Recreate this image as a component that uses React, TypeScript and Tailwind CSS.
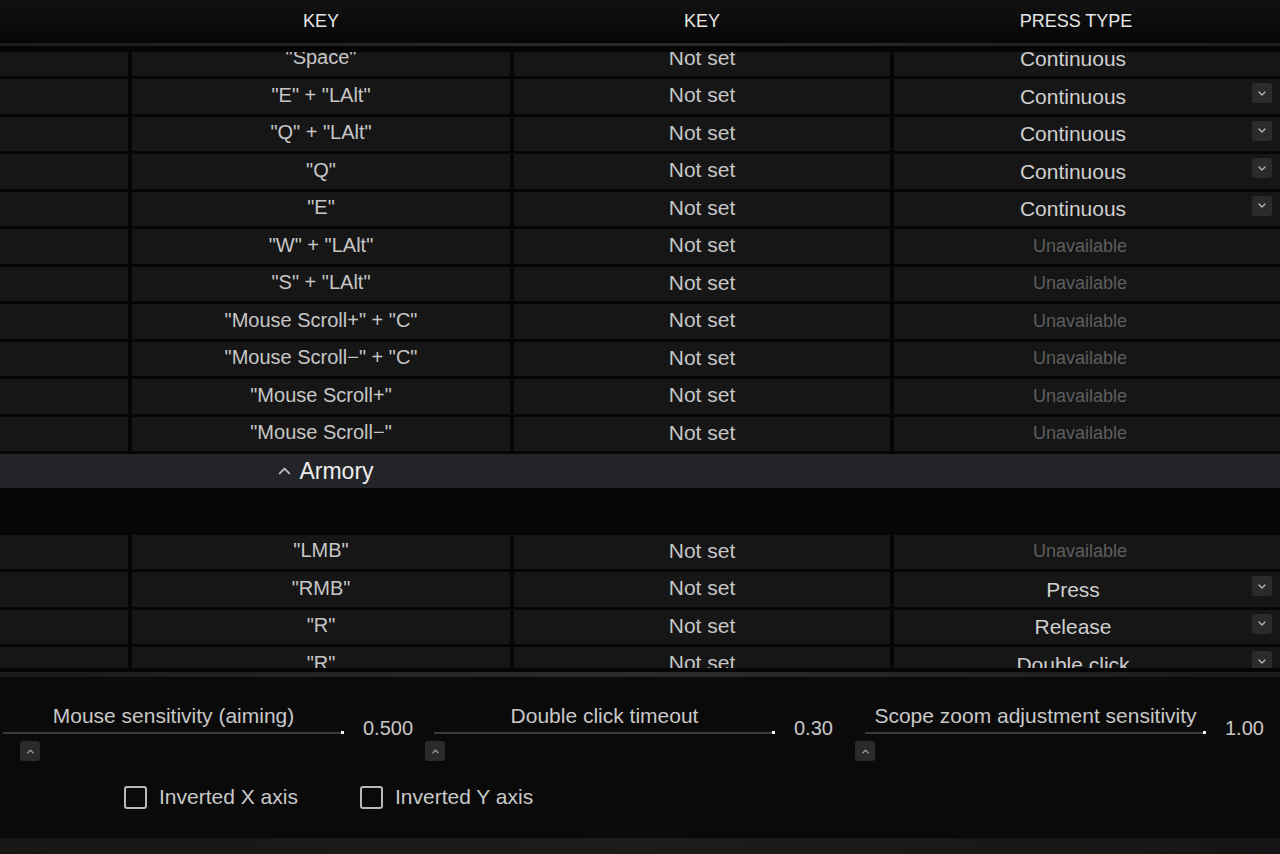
import React from "react";

type Row = { key: string; press: string; btn?: boolean; dim?: boolean };

const groupA: Row[] = [
  { key: '"Space"', press: "Continuous" },
  { key: '"E" + "LAlt"', press: "Continuous", btn: true },
  { key: '"Q" + "LAlt"', press: "Continuous", btn: true },
  { key: '"Q"', press: "Continuous", btn: true },
  { key: '"E"', press: "Continuous", btn: true },
  { key: '"W" + "LAlt"', press: "Unavailable", dim: true },
  { key: '"S" + "LAlt"', press: "Unavailable", dim: true },
  { key: '"Mouse Scroll+" + "C"', press: "Unavailable", dim: true },
  { key: '"Mouse Scroll\u2212" + "C"', press: "Unavailable", dim: true },
  { key: '"Mouse Scroll+"', press: "Unavailable", dim: true },
  { key: '"Mouse Scroll\u2212"', press: "Unavailable", dim: true },
];

const groupB: Row[] = [
  { key: '"LMB"', press: "Unavailable", dim: true },
  { key: '"RMB"', press: "Press", btn: true },
  { key: '"R"', press: "Release", btn: true },
  { key: '"R"', press: "Double click", btn: true },
];

function ChevronDown() {
  return (
    <svg width="8" height="5" viewBox="0 0 8 5" fill="none">
      <path d="M1 1l3 3 3-3" stroke="#b8b8b8" strokeWidth="1.3" strokeLinecap="round" strokeLinejoin="round" />
    </svg>
  );
}

function ChevronUp({ w = 8, h = 5, color = "#b0b0b0", sw = 1.3 }: { w?: number; h?: number; color?: string; sw?: number }) {
  return (
    <svg width={w} height={h} viewBox="0 0 8 5" fill="none">
      <path d="M1 4l3-3 3 3" stroke={color} strokeWidth={sw} strokeLinecap="round" strokeLinejoin="round" />
    </svg>
  );
}

function TableRow({ r }: { r: Row }) {
  return (
    <div className="grid grid-cols-[128px_378px_376px_1fr] gap-x-[4px] h-[34px] mb-[3.5px]">
      <div className="bg-[#161616]" />
      <div className="bg-[#161616] flex items-center justify-center pb-[3px] text-[20px] text-[#c6c6c6] whitespace-nowrap">
        {r.key}
      </div>
      <div className="bg-[#161616] flex items-center justify-center pb-[3px] text-[21px] text-[#c6c6c6]">
        Not set
      </div>
      <div className="bg-[#161616] flex">
        {r.dim ? (
          <div className="flex-1 flex items-center justify-center pr-[14px] text-[18px] text-[#5e5e5e]">
            {r.press}
          </div>
        ) : (
          <>
            <div className="flex-1 flex items-center justify-center text-[21px] text-[#cfcfcf]">
              {r.press}
            </div>
            <div className="w-[28px] flex items-start">
              {r.btn && (
                <div className="mt-[4px] w-[20px] h-[20px] rounded-[3px] bg-[#2a2b2d] flex items-center justify-center">
                  <ChevronDown />
                </div>
              )}
            </div>
          </>
        )}
      </div>
    </div>
  );
}

type Slider = { label: string; value: string; thumb: number };

const sliders: Slider[] = [
  { label: "Mouse sensitivity (aiming)", value: "0.500", thumb: 17 },
  { label: "Double click timeout", value: "0.30", thumb: -9 },
  { label: "Scope zoom adjustment sensitivity", value: "1.00", thumb: -10 },
];

function SliderBlock({ s }: { s: Slider }) {
  return (
    <div className="w-[431px] shrink-0 flex">
      <div className="w-[341px] shrink-0 flex flex-col">
        <div className="h-[26px] leading-[26px] text-center text-[21px] text-[#c8c8c8] whitespace-nowrap">
          {s.label}
        </div>
        <div className="mt-[3px] h-[2px] bg-[#3a3a3a] relative">
          <div className="absolute right-0 -top-[1px] w-[3px] h-[3px] bg-[#f2f2f2]" />
        </div>
        <div
          className="mt-[7px] w-[20px] h-[20px] rounded-[3px] bg-[#2a2b2d] flex items-center justify-center"
          style={{ marginLeft: s.thumb }}
        >
          <ChevronUp w={7} h={5} />
        </div>
      </div>
      <div className="ml-[19px] pt-[13px] text-[20px] leading-[24px] text-[#c8c8c8] whitespace-nowrap">
        {s.value}
      </div>
    </div>
  );
}

function Checkbox({ label }: { label: string }) {
  return (
    <div className="flex items-center gap-[12px]">
      <div className="w-[23px] h-[23px] border-2 border-[#b9b9b9] rounded-[3px]" />
      <span className="text-[21px] text-[#c8c8c8] leading-[24px]">{label}</span>
    </div>
  );
}

export default function App() {
  return (
    <div className="w-[1280px] h-[854px] overflow-hidden bg-[#060606] flex flex-col font-['Liberation_Sans',Arial,sans-serif]">
      {/* header */}
      <div className="h-[43px] shrink-0 bg-gradient-to-b from-[#121212] to-[#060606] grid grid-cols-[128px_378px_376px_1fr] gap-x-[4px] text-[18px] text-[#e6e6e6]">
        <div />
        <div className="flex items-center justify-center">KEY</div>
        <div className="flex items-center justify-center">KEY</div>
        <div className="flex items-center justify-center pr-[22px]">PRESS TYPE</div>
      </div>
      <div className="h-[3px] shrink-0 bg-gradient-to-r from-[#1c1c1c] via-[#2a2a2a] to-[#1e1e1e]" />
      <div className="h-[6px] shrink-0 bg-[#050505]" />

      {/* table viewport */}
      <div className="h-[616px] shrink-0 overflow-hidden">
        <div className="-mt-[10.5px]">
          {groupA.map((r, i) => (
            <TableRow key={"a" + i} r={r} />
          ))}
          <div className="h-[34px] bg-[#232427] grid grid-cols-[128px_378px_376px_1fr] gap-x-[4px]">
            <div />
            <div className="flex items-center justify-center gap-[8px] pl-[10px] pb-[2px]">
              <ChevronUp w={13} h={8} color="#bdbdbd" sw={1.2} />
              <span className="text-[23px] text-[#ececec]">Armory</span>
            </div>
          </div>
          <div className="h-[46.5px]" />
          {groupB.map((r, i) => (
            <TableRow key={"b" + i} r={r} />
          ))}
        </div>
      </div>

      <div className="h-[4px] shrink-0 bg-[#050505]" />
      <div className="h-[5px] shrink-0 bg-gradient-to-r from-[#1a1a1a] via-[#2c2c2a] to-[#1a1a1a]" />

      {/* bottom panel */}
      <div className="h-[161px] shrink-0 bg-[#0a0a0a] flex flex-col pt-[26px]">
        <div className="flex pl-[3px]">
          {sliders.map((s) => (
            <SliderBlock key={s.label} s={s} />
          ))}
        </div>
        <div className="mt-[24px] ml-[124px] flex items-center">
          <div className="w-[236px]">
            <Checkbox label="Inverted X axis" />
          </div>
          <Checkbox label="Inverted Y axis" />
        </div>
      </div>
      <div className="flex-1 bg-gradient-to-r from-[#161614] via-[#1c1c1a] to-[#151515]" />
    </div>
  );
}
